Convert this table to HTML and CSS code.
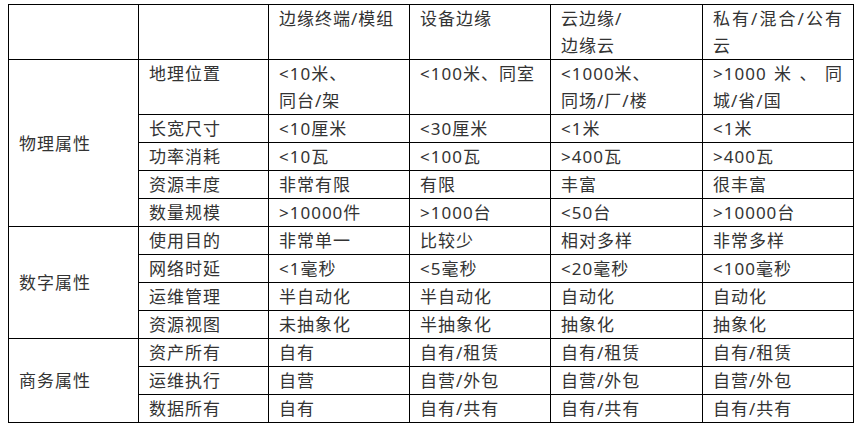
FILE: index.html
```html
<!DOCTYPE html>
<html lang="zh-CN">
<head>
<meta charset="utf-8">
<title>边缘计算分类</title>
<link rel="stylesheet" href="styles.css">
</head>
<body>
<table class="grid">
  <colgroup>
    <col class="c1"><col class="c2"><col class="c3"><col class="c4"><col class="c5"><col class="c6">
  </colgroup>
  <tbody>
    <tr class="tall">
      <td></td><td></td>
      <td>边缘终端/模组</td>
      <td>设备边缘</td>
      <td>云边缘/<br>边缘云</td>
      <td><span class="jl">私有/混合/公有</span>云</td>
    </tr>
    <tr class="tall">
      <td class="cat" rowspan="5">物理属性</td>
      <td>地理位置</td>
      <td>&lt;10米、<br>同台/架</td>
      <td>&lt;100米、同室</td>
      <td>&lt;1000米、<br>同场/厂/楼</td>
      <td><span class="jl">&gt;1000米、同</span>城/省/国</td>
    </tr>
    <tr><td>长宽尺寸</td><td>&lt;10厘米</td><td>&lt;30厘米</td><td>&lt;1米</td><td>&lt;1米</td></tr>
    <tr><td>功率消耗</td><td>&lt;10瓦</td><td>&lt;100瓦</td><td>&gt;400瓦</td><td>&gt;400瓦</td></tr>
    <tr><td>资源丰度</td><td>非常有限</td><td>有限</td><td>丰富</td><td>很丰富</td></tr>
    <tr><td>数量规模</td><td>&gt;10000件</td><td>&gt;1000台</td><td>&lt;50台</td><td>&gt;10000台</td></tr>
    <tr>
      <td class="cat" rowspan="4">数字属性</td>
      <td>使用目的</td><td>非常单一</td><td>比较少</td><td>相对多样</td><td>非常多样</td>
    </tr>
    <tr><td>网络时延</td><td>&lt;1毫秒</td><td>&lt;5毫秒</td><td>&lt;20毫秒</td><td>&lt;100毫秒</td></tr>
    <tr><td>运维管理</td><td>半自动化</td><td>半自动化</td><td>自动化</td><td>自动化</td></tr>
    <tr><td>资源视图</td><td>未抽象化</td><td>半抽象化</td><td>抽象化</td><td>抽象化</td></tr>
    <tr>
      <td class="cat" rowspan="3">商务属性</td>
      <td>资产所有</td><td>自有</td><td>自有/租赁</td><td>自有/租赁</td><td>自有/租赁</td>
    </tr>
    <tr><td>运维执行</td><td>自营</td><td>自营/外包</td><td>自营/外包</td><td>自营/外包</td></tr>
    <tr><td>数据所有</td><td>自有</td><td>自有/共有</td><td>自有/共有</td><td>自有/共有</td></tr>
  </tbody>
</table>
</body>
</html>
```

FILE: styles.css
```css
html, body {
  margin: 0;
  padding: 0;
  background: #ffffff;
}

body {
  padding: 4px 8px;
  font-family: "Noto Sans", "Noto Sans CJK SC", sans-serif;
  font-size: 17px;
  color: #333333;
}

.grid {
  border-collapse: collapse;
  table-layout: fixed;
  width: 845px;
}

.c1 { width: 130px; }
.c2 { width: 130px; }
.c3 { width: 141px; }
.c4 { width: 141px; }
.c5 { width: 152px; }
.c6 { width: 151px; }

.grid td {
  border: 1px solid #000000;
  padding: 0 10px;
  line-height: 27px;
  height: 27px;
  vertical-align: top;
  text-align: justify;
  letter-spacing: 1px;
  overflow: hidden;
}

.grid tr.tall td {
  height: 54px;
}

.grid td.cat {
  vertical-align: middle;
}

.jl {
  display: block;
  text-align: justify;
  text-align-last: justify;
}
```
